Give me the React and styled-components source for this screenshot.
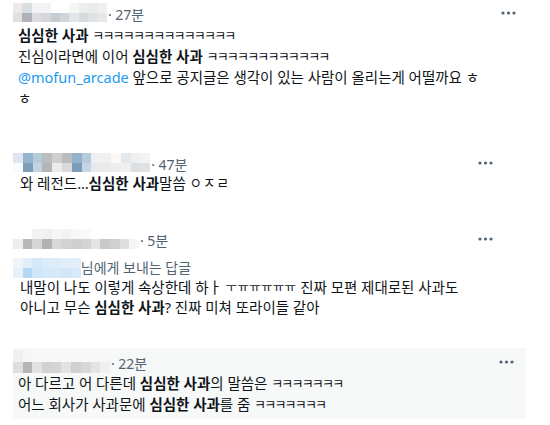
import React from "react";
import styled, { createGlobalStyle } from "styled-components";

const GlobalStyle = createGlobalStyle`
  body {
    margin: 0;
    background: #ffffff;
    font-family: "Noto Sans", "Noto Sans CJK KR", sans-serif;
    color: #0f1419;
  }
`;

// 모자이크 처리된 닉네임 색상
const names = {
  first: [
    ["#eee9e9", "#d9dfe0", "#f3f3f5", "#f2f3f5", "#ffffff", "#ffffff", "#f5f7f5", "#eceeed", "#eaeceb", "#f0f0f0"],
    ["#e0e0e0", "#aeb1b8", "#dcdcdf", "#d3d6da", "#c6cbd0", "#d0d5d9", "#e3e5e8", "#d8dadd", "#e0e3e6", "#e8e8ea"],
  ],
  second: [
    ["#dfe6ef", "#94b4cf", "#b4cbdc", "#bcbcbc", "#cfcfcf", "#b9bdc0", "#93b3cc", "#b4cbde", "#eef0f2", "#eef0f2", "#fdf9f5", "#e3e8ec", "#eef0f2", "#f3f3f3"],
    ["#f9fbfc", "#7d9eb9", "#c3d3e2", "#b5b5b5", "#ebebeb", "#dadada", "#7b9db9", "#c6d6e4", "#e9e9eb", "#ebebed", "#eceef0", "#eef0f2", "#dcdfe2", "#dfe1e4"],
  ],
  third: [
    ["#ffffff", "#ffffff", "#f3f3f3", "#f0f0f0", "#f6f6f6", "#f3f3f3", "#f8f8f8", "#fafafa", "#ffffff", "#ffffff", "#ffffff", "#ffffff", "#ffffff"],
    ["#eeeeee", "#b9b9b9", "#d6d6d6", "#b2b2b2", "#d8d8d8", "#d2d2d2", "#cfcfcf", "#d4d4d4", "#e4e4e4", "#c9c9c9", "#d0d0d0", "#dedede", "#f6f6f6"],
  ],
  fourth: [
    ["#f0f0f0", "#f7f7f7", "#f8f8f8", "#f8f8f8", "#f8f8f8", "#f8f8f8", "#f8f8f8", "#f8f8f8", "#f8f8f8", "#f8f8f8"],
    ["#dedede", "#b5b5b5", "#e2e2e2", "#d2d2d2", "#d4d4d4", "#e2e2e2", "#d0d0d0", "#d8d8d8", "#e4e4e4", "#f0f0f0"],
  ],
  reply: [
    ["#eef4fa", "#e0eefa", "#d4e8f8", "#dcecf9", "#dcecf9", "#dfeefa", "#e2effa"],
    ["#e7f1fa", "#b3d9f7", "#cfe5f8", "#d5e8f8", "#d6e8f8", "#d2e6f8", "#d8eaf9"],
  ],
};

const Mosaic = ({ rows, cell = 9.5, height = 19 }) => (
  <MosaicGrid $cols={rows[0].length} $cell={cell} $height={height}>
    {rows.flat().map((c, i) => (
      <span key={i} style={{ background: c }} />
    ))}
  </MosaicGrid>
);

const Dots = () => (
  <svg width="15" height="4" viewBox="0 0 15 4">
    <circle cx="2" cy="2" r="1.6" fill="#536471" />
    <circle cx="7.5" cy="2" r="1.6" fill="#536471" />
    <circle cx="13" cy="2" r="1.6" fill="#536471" />
  </svg>
);

const B = ({ children }) => <Bold>{children}</Bold>;

const App = () => (
  <>
    <GlobalStyle />
    <Page>
      <Tweet $top={3} $width={505}>
        <Header $h={19}>
          <Who>
            <Mosaic rows={names.first} cell={9.4} />
            <Time>· 27분</Time>
          </Who>
          <Dots />
        </Header>
        <Body $gap={2.5}>
          <Line>
            <B>심심한 사과</B> <Jamo>ㅋㅋㅋㅋㅋㅋㅋㅋㅋㅋㅋㅋㅋㅋ</Jamo>
          </Line>
          <Line>
            진심이라면에 이어 <B>심심한 사과</B> <Jamo>ㅋㅋㅋㅋㅋㅋㅋㅋㅋㅋㅋㅋ</Jamo>
          </Line>
          <Line>
            <Mention>@mofun_arcade</Mention> 앞으로 공지글은 생각이 있는 사람이 올리는게 어떨까요 ㅎ
          </Line>
          <Line>ㅎ</Line>
        </Body>
      </Tweet>

      <Tweet $top={44.5} $width={482}>
        <Header $h={19}>
          <Who>
            <Mosaic rows={names.second} cell={9.8} />
            <Time>· 47분</Time>
          </Who>
          <Dots />
        </Header>
        <Body $gap={0.5} $indent={2}>
          <Line>
            와 레전드…<B>심심한 사과</B>말씀 <Jamo $size={13.5} $ls={1}>ㅇㅈㄹ</Jamo>
          </Line>
        </Body>
      </Tweet>

      <Tweet $top={35.5} $width={482}>
        <Header $h={20}>
          <Who>
            <Mosaic rows={names.third} cell={9.7} height={20} />
            <Time>· 5분</Time>
          </Who>
          <Dots />
        </Header>
        <ReplyTo>
          <Mosaic rows={names.reply} cell={9.7} height={20} />
          <span>님에게 보내는 답글</span>
        </ReplyTo>
        <Body $gap={-1} $indent={2}>
          <Line $h={20}>
            내말이 나도 이렇게 속상한데 하ㅏ <Jamo $size={12.5} $ls={0.3}>ㅜㅠㅠㅠㅠㅠ</Jamo> 진짜 모편 제대로된 사과도
          </Line>
          <Line $h={20}>
            아니고 무슨 <B>심심한 사과</B>? 진짜 미쳐 또라이들 같아
          </Line>
        </Body>
      </Tweet>

      <Tweet $top={31} $width={513} $shaded>
        <Header $h={23}>
          <Who>
            <Mosaic rows={names.fourth} cell={9.7} height={23} />
            <Time>· 22분</Time>
          </Who>
          <Dots />
        </Header>
        <Body $gap={-0.5}>
          <Line>
            아 다르고 어 다른데 <B>심심한 사과</B>의 말씀은 <Jamo>ㅋㅋㅋㅋㅋㅋㅋ</Jamo>
          </Line>
          <Line>
            어느 회사가 사과문에 <B>심심한 사과</B>를 줌 <Jamo>ㅋㅋㅋㅋㅋㅋㅋ</Jamo>
          </Line>
        </Body>
      </Tweet>
    </Page>
  </>
);

const Page = styled.div`
  display: flex;
  flex-direction: column;
  padding-left: 13px;
  width: 550px;
  height: 425px;
  box-sizing: border-box;
  overflow: hidden;
`;

const Tweet = styled.section`
  flex: none;
  margin-top: ${(p) => p.$top}px;
  width: ${(p) => p.$width}px;
  background: ${(p) => (p.$shaded ? "#f7f8f8" : "transparent")};
  padding: ${(p) => (p.$shaded ? "2px 10px 4.5px 0" : "0")};
  box-sizing: border-box;
`;

const Header = styled.div`
  display: flex;
  align-items: center;
  justify-content: space-between;
  height: ${(p) => p.$h}px;
  padding-right: 2px;
`;

const Who = styled.div`
  display: flex;
  align-items: center;
  height: 100%;
`;

const MosaicGrid = styled.div`
  display: grid;
  grid-template-columns: repeat(${(p) => p.$cols}, ${(p) => p.$cell}px);
  grid-template-rows: repeat(2, ${(p) => p.$height / 2}px);
  filter: blur(0.4px);
`;

const Time = styled.span`
  font-size: 14px;
  color: #536471;
  margin-left: 1px;
  padding-top: 4px;
  line-height: 16px;
  white-space: nowrap;
`;

const ReplyTo = styled.div`
  display: flex;
  align-items: center;
  height: 20px;
  margin-top: 9px;
  font-size: 14px;
  line-height: 20px;
  color: #536471;
`;

const Body = styled.div`
  display: flex;
  flex-direction: column;
  margin-top: ${(p) => p.$gap}px;
  padding-left: ${(p) => 5 + (p.$indent || 0)}px;
  font-size: 14.5px;
  color: #0f1419;
`;

const Line = styled.div`
  height: ${(p) => p.$h || 21}px;
  line-height: ${(p) => p.$h || 21}px;
  white-space: nowrap;
`;

// 자모(ㅋ, ㅠ)는 원본처럼 작고 촘촘하게
const Jamo = styled.span`
  font-size: ${(p) => p.$size || 13}px;
  letter-spacing: ${(p) => (p.$ls !== undefined ? p.$ls : -1.8)}px;
  vertical-align: 1px;
`;

const Bold = styled.b`
  font-weight: 700;
`;

const Mention = styled.span`
  color: #1d9bf0;
`;

export default App;
